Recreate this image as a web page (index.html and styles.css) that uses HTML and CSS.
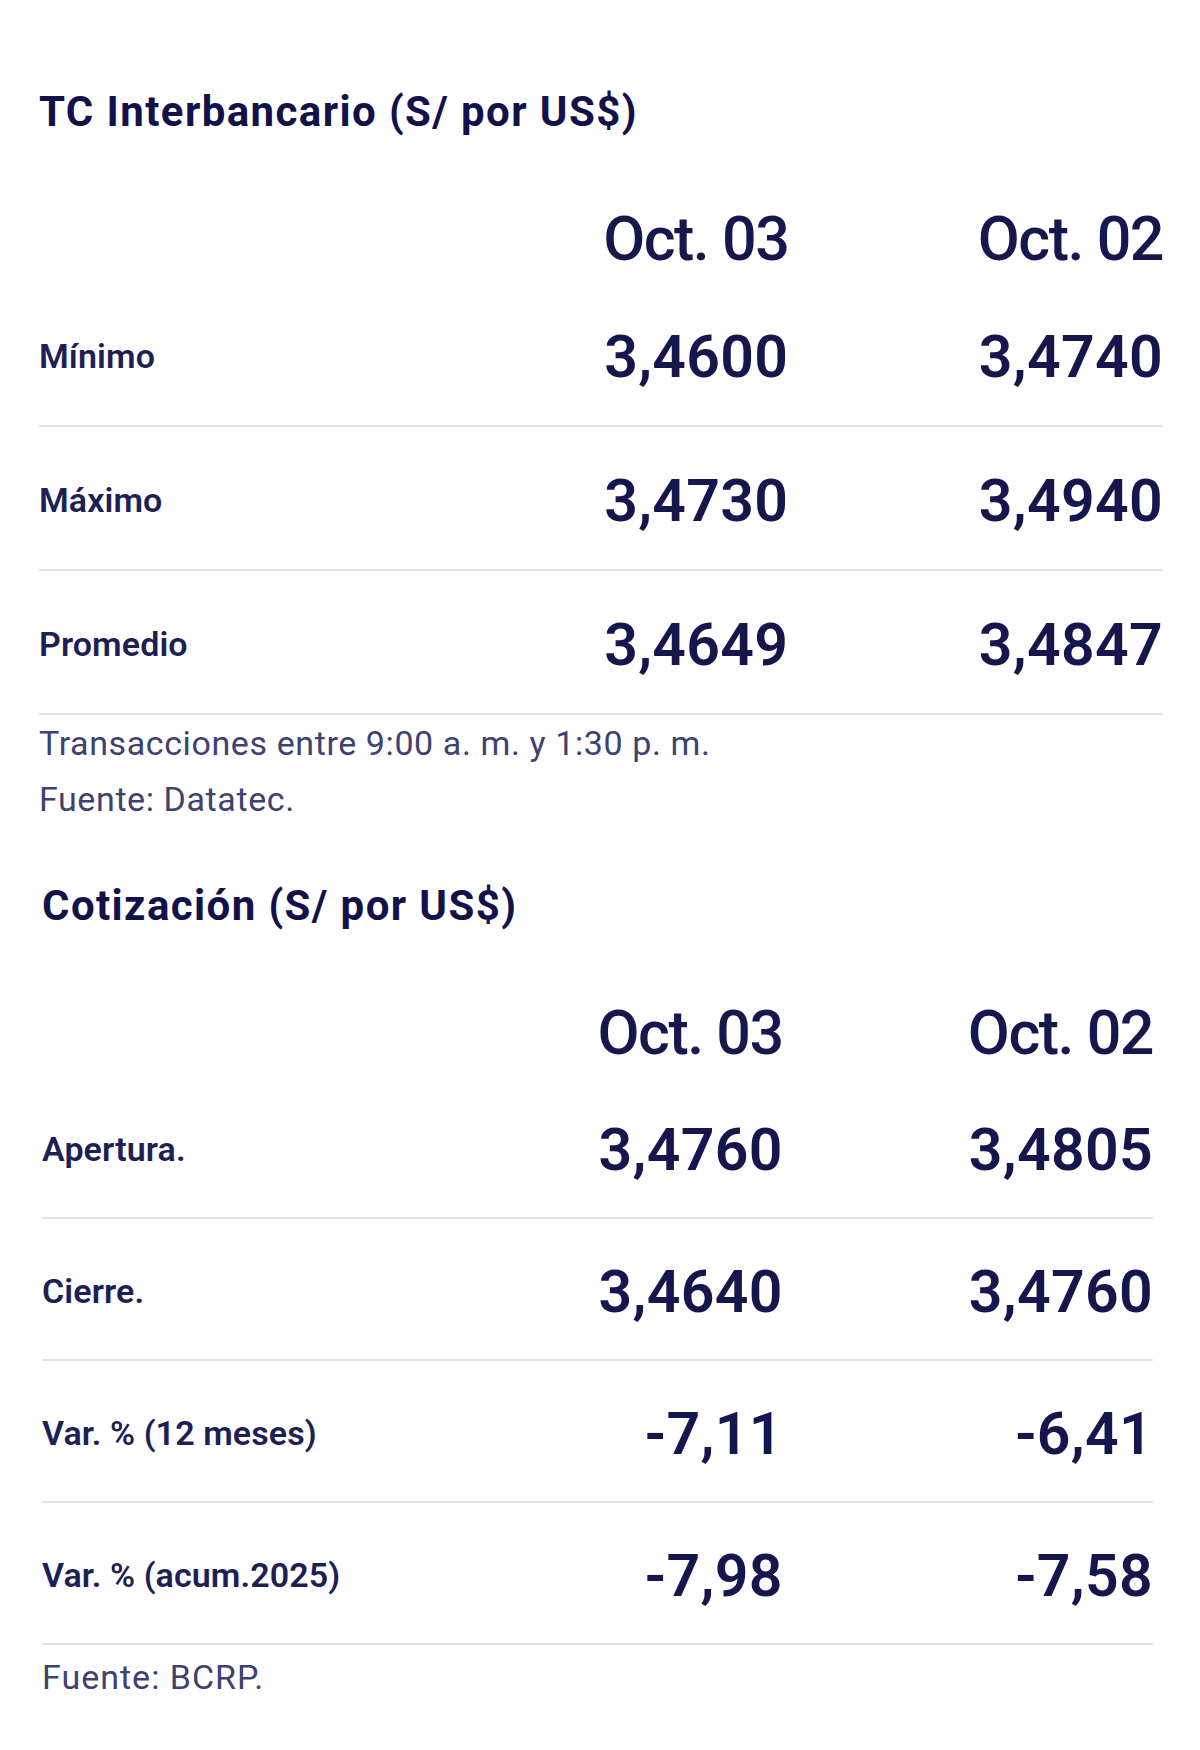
FILE: index.html
```html
<!DOCTYPE html>
<html lang="es">
<head>
<meta charset="utf-8">
<title>Tipo de cambio</title>
<link rel="stylesheet" href="styles.css">
</head>
<body>
<main class="page">
  <section class="block block-inter">
    <h2 class="title">TC Interbancario (S/ por US$)</h2>
    <div class="table">
      <div class="row head"><span></span><span class="date">Oct. 03</span><span class="date">Oct. 02</span></div>
      <div class="row"><span class="label">Mínimo</span><span class="val">3,4600</span><span class="val">3,4740</span></div>
      <div class="row"><span class="label">Máximo</span><span class="val">3,4730</span><span class="val">3,4940</span></div>
      <div class="row"><span class="label">Promedio</span><span class="val">3,4649</span><span class="val">3,4847</span></div>
    </div>
    <p class="note">Transacciones entre 9:00 a. m. y 1:30 p. m.<br>Fuente: Datatec.</p>
  </section>
  <section class="block block-cot">
    <h2 class="title">Cotización (S/ por US$)</h2>
    <div class="table">
      <div class="row head"><span></span><span class="date">Oct. 03</span><span class="date">Oct. 02</span></div>
      <div class="row"><span class="label">Apertura.</span><span class="val">3,4760</span><span class="val">3,4805</span></div>
      <div class="row"><span class="label">Cierre.</span><span class="val">3,4640</span><span class="val">3,4760</span></div>
      <div class="row"><span class="label">Var. % (12 meses)</span><span class="val">-7,11</span><span class="val">-6,41</span></div>
      <div class="row"><span class="label">Var. % (acum.2025)</span><span class="val">-7,98</span><span class="val">-7,58</span></div>
    </div>
    <p class="note">Fuente: BCRP.</p>
  </section>
</main>
</body>
</html>
```
FILE: styles.css
```css
html, body {
  margin: 0;
  padding: 0;
  background: #ffffff;
}

body {
  font-family: Roboto, "Liberation Sans", Arial, sans-serif;
  color: #15164c;
}

.page {
  padding-top: 87px;
  width: 1200px;
}

.block-inter {
  margin-left: 39px;
  width: 1124px;
}

.block-cot {
  margin-left: 42px;
  width: 1111px;
}

.title {
  margin: 0;
  height: 50px;
  line-height: 50px;
  font-size: 42px;
  font-weight: 700;
  letter-spacing: 1.4px;
  color: #12124a;
  white-space: nowrap;
}

.block-cot .title {
  margin-top: 54px;
}

.table {
  display: flex;
  flex-direction: column;
}

.row {
  display: grid;
  grid-template-columns: 1fr 1fr 1fr;
  align-items: center;
  box-sizing: border-box;
  height: 144px;
  padding-top: 4px;
  border-bottom: 2px solid #e2e2e9;
}

.block-cot .row {
  height: 142px;
}

.row.head {
  height: 146px;
  padding-top: 58px;
  border-bottom: none;
}

.label {
  font-size: 34px;
  font-weight: 600;
  letter-spacing: 0.1px;
  color: #1d1f55;
  white-space: nowrap;
}

.date {
  text-align: right;
  font-size: 61px;
  font-weight: 500;
  letter-spacing: -1.5px;
  line-height: 1;
  color: #16174d;
}

.val {
  text-align: right;
  font-size: 59px;
  font-weight: 600;
  letter-spacing: 0.3px;
  line-height: 1;
  color: #15164c;
}

.note {
  margin: 0;
  padding-top: 0;
  font-size: 34px;
  line-height: 56px;
  font-weight: 400;
  letter-spacing: 0.6px;
  color: #3f4170;
}

.block-cot .note {
  padding-top: 4px;
  letter-spacing: 1px;
}
```
